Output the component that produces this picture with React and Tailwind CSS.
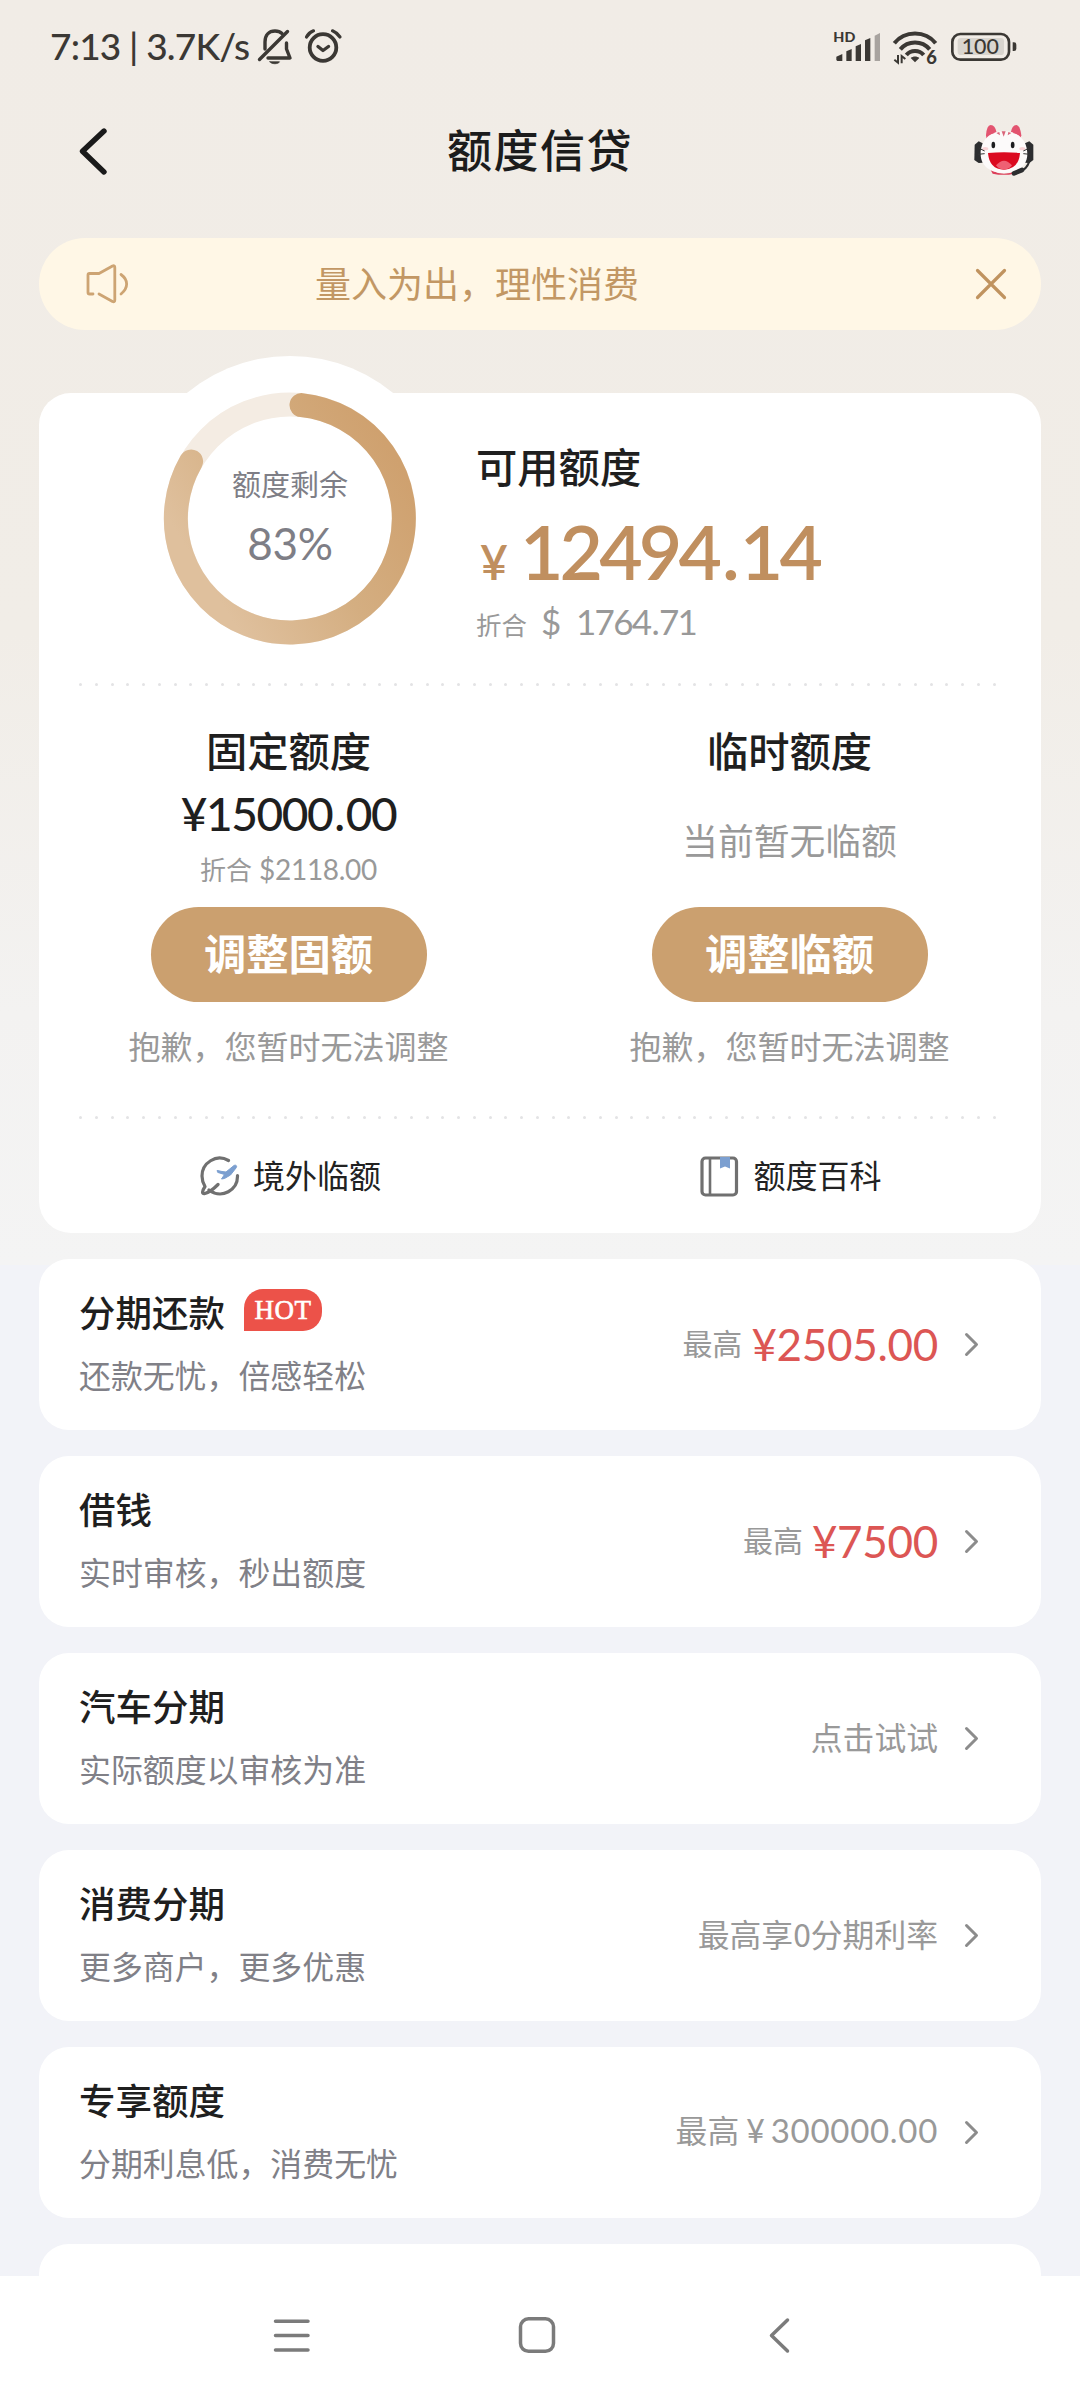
import React from "react";

const CJK = "font-['Noto_Sans_CJK_SC',sans-serif]";
const NUM = "font-['Lato','Noto_Sans_CJK_SC',sans-serif]";

function StatusBar() {
  return (
    <div className="flex h-[92px] items-start justify-between pl-[50px] pr-[62px] pt-[26px] text-[#3b3834]">
      <div className="flex items-start">
        <span className="w-[205px] whitespace-nowrap font-['Lato',sans-serif] text-[37px] font-medium leading-[40px] tracking-[-0.800px]">
          7:13 | 3.7K/s
        </span>
        <svg width="40" height="44" viewBox="255 26 40 44" fill="none" stroke="#3b3834" strokeWidth="3.4" strokeLinecap="round" strokeLinejoin="round">
          <path d="M265 49V42C265 35 269 31 275 31C278 31 280.500 32 282 33.500" />
          <path d="M286.500 43V49L290 58H268" />
          <path d="M287.500 31.500L259.500 59.500" />
          <path d="M270 61.800H279.500C278.500 64.400 271 64.400 270 61.800Z" fill="#3b3834" strokeWidth="0.8" />
        </svg>
        <svg width="44" height="44" viewBox="301 26 44 44" className="ml-[6px]" fill="none" stroke="#3b3834" strokeWidth="3.8" strokeLinecap="round" strokeLinejoin="round">
          <circle cx="323" cy="47.500" r="13.300" />
          <path d="M318 46.500L323 50.500L328.500 46.500" strokeWidth="3.400" />
          <path d="M306.500 37C308 34 310.500 32 313.500 30.800" strokeWidth="3.200" />
          <path d="M332.500 30.800C335.500 32 338 34 340 37" strokeWidth="3.200" />
        </svg>
      </div>
      <div className="flex items-start pt-[4px]">
        <svg width="50" height="36" viewBox="42 30 150 108" fill="#3b3834">
          <text x="43" y="66" fontFamily="Lato, sans-serif" fontWeight="900" fontSize="41" textLength="66" lengthAdjust="spacingAndGlyphs">HD</text>
          <path d="M52 120V110L70 102V123H55Z" />
          <path d="M82 123V94L98 87V123Z" />
          <path d="M110 123V79L126 72V123Z" />
          <path d="M138 123V61L154 54V123Z" />
          <path d="M167 123V47L183 39V123Z" opacity="0.4" />
        </svg>
        <svg width="50" height="38" viewBox="216 30 150 114" className="ml-[9px]" fill="none" stroke="#3b3834" strokeWidth="12">
          <path d="M223 70C254 31 316 31 347 70" />
          <path d="M241 88C264 61 306 61 329 88" />
          <path d="M259 105C272 89 298 89 311 105" />
          <path d="M272 114C279 108 291 108 298 114L285 127Z" fill="#3b3834" stroke="none" />
          <path d="M223 119L234 128V105M245 130V108L256 117" strokeWidth="6" />
          <text x="319" y="132" fill="#3b3834" stroke="none" fontFamily="Lato, sans-serif" fontWeight="900" fontSize="55">6</text>
        </svg>
        <svg width="68" height="36" viewBox="389 30 204 108" className="ml-[8px]" fill="none">
          <rect x="396" y="42" width="170" height="77" rx="24" stroke="#3b3834" strokeWidth="8" />
          <rect x="412" y="54" width="139" height="51" rx="10" fill="#d9d5cf" />
          <text x="424" y="101" fill="#3b3834" fontFamily="Lato, sans-serif" fontWeight="500" fontSize="65" textLength="112" lengthAdjust="spacingAndGlyphs">100</text>
          <path d="M577 67H581Q588 67 588 74V86Q588 93 581 93H577Z" fill="#3b3834" />
        </svg>
      </div>
    </div>
  );
}

function Mascot() {
  return (
    <svg width="66" height="60" viewBox="36 36 198 180" className="mt-px">
      <path d="M44 104L56 94L68 100V158L56 159L43 150Z" fill="#2c2d2f" />
      <path d="M220 104L208 94L195 100V158L208 159L220 150Z" fill="#2c2d2f" />
      <path d="M92 180Q132 202 172 180L162 191Q132 198 98 191Z" fill="#dc3f5a" />
      <path d="M78 76Q80 46 92 45Q106 46 110 68L80 90Z" fill="#e35470" />
      <path d="M184 76Q180 45 169 45Q156 46 152 68L180 90Z" fill="#e35470" />
      <path d="M132 64C175 62 202 92 202 132C202 170 170 189 132 189C94 189 62 170 62 132C62 92 90 62 132 64Z" fill="#fcfafa" />
      <path d="M82 76Q86 60 94 60Q102 62 104 69ZM181 76Q178 60 170 60Q161 62 159 69Z" fill="#e35470" />
      <path d="M125 64H137L131 80ZM109 69L118 66L120 76ZM145 66L154 69L143 76Z" fill="#d9667a" />
      <ellipse cx="100" cy="105" rx="5.500" ry="10" fill="#1d1d1f" />
      <ellipse cx="158" cy="105" rx="5.500" ry="10" fill="#1d1d1f" />
      <ellipse cx="76" cy="116" rx="9" ry="5" fill="#f9d3d6" />
      <ellipse cx="187" cy="116" rx="9" ry="5" fill="#f9d3d6" />
      <path d="M84 129Q132 125 180 129Q176 178 132 179Q88 178 84 129Z" fill="#db0a20" />
      <path d="M108 166Q132 138 156 166Q146 179 132 179Q118 179 108 166Z" fill="#ef6073" />
      <path d="M56 114L74 123M54 133L74 131M208 114L190 123M210 133L190 131" stroke="#333" strokeWidth="3" />
      <path d="M208 154Q200 178 180 184" fill="none" stroke="#2c2d2f" strokeWidth="6" />
      <path d="M186 180L162 190" stroke="#2c2d2f" strokeWidth="14" strokeLinecap="round" />
    </svg>
  );
}

function Header() {
  return (
    <div className="flex h-[146px] items-start pl-[76px] pr-[42px] pt-[29px]">
      <svg width="36" height="60" viewBox="76 121 36 60" fill="none" stroke="#1a1a1a" strokeWidth="5.400" strokeLinecap="round" strokeLinejoin="round">
        <path d="M104 131L82.500 151.300L104 172" />
      </svg>
      <h1 className={`${CJK} flex-1 pl-[335px] pt-[2px] text-[45px] font-medium leading-[52px] tracking-[1.500px] text-[#1c1c1c]`}>额度信贷</h1>
      <Mascot />
    </div>
  );
}

function Notice() {
  return (
    <div className="mx-[39px] flex h-[92px] items-center rounded-full bg-[#fff7e6] text-[#c29764]">
      <svg width="46" height="46" viewBox="84 262 46 46" className="ml-[45px]" fill="none" stroke="#cda473" strokeWidth="2.800" strokeLinecap="round" strokeLinejoin="round">
        <path d="M93 295H89.500Q88 295 88 293.500V276Q88 274.500 89.500 274.500H99L112.500 267Q114.800 266 114.800 268.500V301Q114.800 303.500 112.500 302.500L99 295" />
        <path d="M121 275.500C128.500 281 128.500 289 121 295" />
      </svg>
      <span className={`${CJK} ml-[185px] flex-1 pb-[4px] text-[36px] leading-[44px]`}>量入为出，理性消费</span>
      <svg width="36" height="36" viewBox="0 0 36 36" className="mr-[32px]" fill="none" stroke="#c0935f" strokeWidth="3.200" strokeLinecap="round">
        <path d="M4.500 4.500L31.500 31.500M31.500 4.500L4.500 31.500" />
      </svg>
    </div>
  );
}

function Gauge() {
  return (
    <div className="relative -mt-[37px] ml-[89px] h-[324px] w-[324px] shrink-0">
      <svg width="324" height="324" viewBox="-162 -162 324 324" fill="none">
        <defs>
          <linearGradient id="ring" gradientUnits="userSpaceOnUse" x1="80" y1="-100" x2="-110" y2="20">
            <stop offset="0" stopColor="#cfa16f" />
            <stop offset="0.500" stopColor="#d4ae81" />
            <stop offset="1" stopColor="#dfc09d" />
          </linearGradient>
        </defs>
        <circle r="162" fill="#fff" />
        <circle r="114" cy="0.500" stroke="#f4ece3" strokeWidth="24" />
        <path d="M11.500 -112.900A114 114 0 1 1 -98.900 -56.500" stroke="url(#ring)" strokeWidth="24" strokeLinecap="round" />
      </svg>
      <div className="absolute inset-0 flex flex-col items-center text-[#7e7e86]">
        <span className={`${CJK} mt-[109px] text-[29px] leading-[36px]`}>额度剩余</span>
        <span className={`${NUM} mt-[20px] text-[44px] leading-[44px] tracking-[-0.200px]`}>83%</span>
      </div>
    </div>
  );
}

function Dots() {
  return (
    <div className="ml-[40px] mr-[45px] flex h-[4px] items-center justify-between">
      {Array.from({ length: 59 }, (_, i) => (
        <i key={i} className="size-[3px] rounded-full bg-[#e3e3e5]" />
      ))}
    </div>
  );
}

function QuotaButton({ children }) {
  return (
    <button className={`${CJK} flex h-[95px] w-[276px] items-center justify-center rounded-full bg-[#cba06f] pb-[6px] text-[42.300px] font-bold leading-[50px] text-white`}>
      {children}
    </button>
  );
}

function QuotaCard() {
  const title = `${CJK} text-[41.300px] font-medium leading-[48px] text-[#1f1f1f]`;
  const note = `${CJK} mt-[23px] text-[32px] leading-[40px] text-[#999]`;
  return (
    <section className="mx-[39px] mt-[63px] h-[840px] rounded-[32px] bg-white">
      <div className="flex h-[289px]">
        <Gauge />
        <div className="ml-[24px] pt-[48px]">
          <h2 className={title}>可用额度</h2>
          <div className={`${NUM} mt-[24px] flex h-[76px] items-baseline whitespace-nowrap text-[#c08f5f]`}>
            <span className="ml-[4px] w-[40px] text-[48px] font-semibold leading-[76px]">¥</span>
            <span className="text-[75px] font-semibold leading-[76px] tracking-[-3.900px]">
              12494<span className="mx-[4px]">.</span>14
            </span>
          </div>
          <div className="mt-[14px] flex items-baseline whitespace-nowrap leading-[36px] text-[#999]">
            <span className={`${CJK} w-[65px] text-[25.500px]`}>折合</span>
            <span className={`${NUM} w-[35px] text-[35px]`}>$</span>
            <span className={`${NUM} text-[35px] tracking-[-1.700px]`}>
              1764<span className="mx-[1px]">.</span>71
            </span>
          </div>
        </div>
      </div>
      <Dots />
      <div className="grid h-[429px] grid-cols-2 pt-[39px]">
        <div className="flex flex-col items-center pr-[2px]">
          <h3 className={title}>固定额度</h3>
          <div className={`${NUM} mt-[18px] text-[46px] font-medium leading-[46px] tracking-[-1.400px] text-[#1f1f1f]`}>
            ¥15000<span className="mx-[2px]">.</span>00
          </div>
          <div className="mb-[23px] mt-[17px] flex h-[30px] items-baseline gap-[7px] leading-[30px] text-[#999]">
            <span className={`${CJK} text-[26px]`}>折合</span>
            <span className={`${NUM} text-[28px] tracking-[-0.300px]`}>$2118.00</span>
          </div>
          <QuotaButton>调整固额</QuotaButton>
          <p className={note}>抱歉，您暂时无法调整</p>
        </div>
        <div className="flex flex-col items-center pr-[2px]">
          <h3 className={title}>临时额度</h3>
          <p className={`${CJK} mb-[44px] mt-[42px] text-[35.800px] leading-[48px] text-[#999]`}>当前暂无临额</p>
          <QuotaButton>调整临额</QuotaButton>
          <p className={note}>抱歉，您暂时无法调整</p>
        </div>
      </div>
      <Dots />
      <div className={`${CJK} grid grid-cols-2 pt-[34px] text-[32px] leading-[44px] text-[#222]`}>
        <div className="flex h-[46px] items-center justify-center gap-[13px]">
          <svg width="42" height="42" viewBox="198 1155 42 42" fill="none" stroke="#707070" strokeWidth="3.200" strokeLinecap="round" strokeLinejoin="round">
            <path d="M228.500 1160.500C216 1153.500 202 1163 202 1176C202 1181 203.500 1184 205 1186.500C202 1191 201.500 1194.500 205 1193.500C209 1192.500 214 1188.500 218 1184.500" />
            <path d="M209 1190C222 1199.500 238 1190 237.500 1175.500" />
            <path d="M217.500 1170.500L222 1171.500L226 1172L234 1165.500C236 1164.500 237.500 1166 236 1168L230.500 1175L224.500 1178.500L221.500 1179L224.500 1174.500L218 1172.500Z" fill="#7b9fd0" stroke="#7b9fd0" strokeWidth="1" />
          </svg>
          <span className="pb-[5px]">境外临额</span>
        </div>
        <div className="flex h-[46px] items-center justify-center gap-[14px]">
          <svg width="40" height="42" viewBox="699 1155 40 42" fill="none" stroke="#707070" strokeWidth="3.200">
            <rect x="702" y="1158" width="34.500" height="37" rx="3.500" />
            <path d="M710 1158V1195" strokeWidth="2.600" />
            <path d="M720 1157H730V1168.500L725 1166.500L720 1168.500Z" fill="#7b9fd0" stroke="none" />
          </svg>
          <span className="pb-[5px]">额度百科</span>
        </div>
      </div>
    </section>
  );
}

const rows = [
  { title: "分期还款", hot: true, sub: "还款无忧，倍感轻松", label: "最高", price: "¥2505.00" },
  { title: "借钱", sub: "实时审核，秒出额度", label: "最高", price: "¥7500" },
  { title: "汽车分期", sub: "实际额度以审核为准", text: "点击试试" },
  { title: "消费分期", sub: "更多商户，更多优惠", text: "最高享0分期利率" },
  { title: "专享额度", sub: "分期利息低，消费无忧", text: "最高", amount: "300000.00" },
];

function Row({ row }) {
  return (
    <section className="mx-[39px] flex h-[171px] shrink-0 items-start rounded-[30px] bg-white pl-[40px] pr-[59px]">
      <div className={`${CJK} flex-1 pt-[29px]`}>
        <div className="flex h-[48px] items-center">
          <h3 className="text-[36.500px] font-medium leading-[48px] text-[#1f1f1f]">{row.title}</h3>
          {row.hot && (
            <span className="mb-[4px] ml-[19px] flex h-[42px] w-[78px] items-center justify-center rounded-[19px] rounded-bl-none bg-[#ec5249] font-['Liberation_Serif',serif] text-[27px] leading-none tracking-[0.500px] text-white [-webkit-text-stroke:0.600px_white]">
              HOT
            </span>
          )}
        </div>
        <p className="mt-[18px] text-[31.900px] leading-[40px] text-[#808087]">{row.sub}</p>
      </div>
      <div className="flex h-[171px] items-center text-[#999]">
        {row.price ? (
          <div className="flex items-center whitespace-nowrap leading-[48px]">
            <span className={`${CJK} mr-[9px] pb-[5px] text-[30px]`}>{row.label}</span>
            <span className={`${NUM} pb-[2px] text-[44px] tracking-[-0.300px] text-[#dc5654]`}>{row.price}</span>
          </div>
        ) : (
          <div className="flex items-baseline whitespace-nowrap pb-[6px] leading-[48px]">
            <span className={`${CJK} text-[31.800px]`}>{row.text}</span>
            {row.amount && (
              <>
                <span className={`${NUM} ml-[7px] mr-[6px] text-[32px]`}>¥</span>
                <span className={`${NUM} text-[33px] tracking-[0.700px]`}>{row.amount}</span>
              </>
            )}
          </div>
        )}
        <svg width="20" height="28" viewBox="0 0 20 28" className="ml-[24px]" fill="none" stroke="#8c8c8c" strokeWidth="3" strokeLinecap="round" strokeLinejoin="round">
          <path d="M4.500 3.500L14.500 13.500L4.500 23.500" />
        </svg>
      </div>
    </section>
  );
}

function NavBar() {
  return (
    <nav className="flex h-[124px] shrink-0 items-start bg-white pl-[272px] pt-[39px]">
      <svg width="40" height="40" viewBox="272 2315 40 40" stroke="#7b7b7b" strokeWidth="3.500" strokeLinecap="round">
        <path d="M275.500 2321.300H308M275.500 2335.500H308M275.500 2350H308" />
      </svg>
      <svg width="40" height="40" viewBox="517 2315 40 40" className="ml-[205px]" fill="none" stroke="#7b7b7b" strokeWidth="3.500">
        <rect x="520.500" y="2318.800" width="33" height="32.500" rx="8" />
      </svg>
      <svg width="26" height="40" viewBox="767 2315 26 40" className="ml-[210px]" fill="none" stroke="#7b7b7b" strokeWidth="3.500" strokeLinecap="round" strokeLinejoin="round">
        <path d="M787.500 2320L771.500 2335.500L787.500 2351" />
      </svg>
    </nav>
  );
}

export default function App() {
  return (
    <div className="flex h-[2400px] w-[1080px] flex-col overflow-hidden bg-[#f2f3f8]">
      <div className="flex min-h-0 flex-1 flex-col overflow-hidden">
        <div className="h-[1265px] shrink-0 bg-[linear-gradient(180deg,#f1ece6_0%,#f1ede7_50%,#f3f2f1_80%,#f4f4f4_100%)]">
          <StatusBar />
          <Header />
          <Notice />
          <QuotaCard />
        </div>
        <div className="-mt-[6px] flex flex-col gap-[26px]">
          {rows.map((row) => (
            <Row key={row.title} row={row} />
          ))}
          <div className="mx-[39px] h-[171px] shrink-0 rounded-[30px] bg-white" />
        </div>
      </div>
      <NavBar />
    </div>
  );
}
